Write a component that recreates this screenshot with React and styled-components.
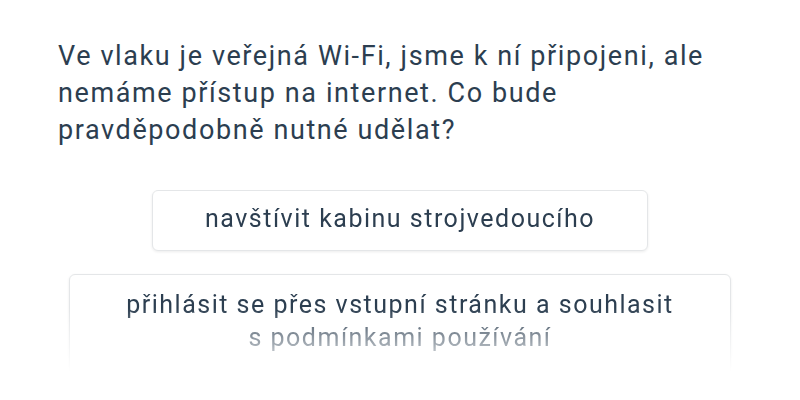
import React from "react";
import styled, { createGlobalStyle } from "styled-components";

const Global = createGlobalStyle`
  html, body { margin: 0; padding: 0; background: #ffffff; }
  body { font-family: Roboto, "Noto Sans", "Liberation Sans", sans-serif; -webkit-font-smoothing: antialiased; }
`;

const Page = styled.div`
  width: 800px;
  height: 400px;
  overflow: hidden;
  box-sizing: border-box;
  padding: 38px 58px 0 58px;
  display: flex;
  flex-direction: column;
`;

const Question = styled.h1`
  margin: 0;
  font-size: 27px;
  font-weight: 400;
  line-height: 37px;
  letter-spacing: 1.6px;
  color: #2c3e50;
  max-width: 680px;
`;

const Answers = styled.div`
  margin-top: 41px;
  display: flex;
  flex-direction: column;
  align-items: center;
  gap: 23px;
  -webkit-mask-image: linear-gradient(to bottom, #000 0, #000 118px, rgba(0,0,0,0) 182px);
  mask-image: linear-gradient(to bottom, #000 0, #000 118px, rgba(0,0,0,0) 182px);
`;

const Answer = styled.button`
  box-sizing: border-box;
  width: fit-content;
  max-width: 662px;
  min-height: 60px;
  padding: ${(p) => (p.$multi ? "13px 52px 40px" : "11px 52px 15px")};
  background: #ffffff;
  border: 1px solid #e4e6e8;
  border-radius: 6px;
  box-shadow: 0 1px 3px rgba(0, 0, 0, 0.08);
  font-family: Roboto, "Noto Sans", "Liberation Sans", sans-serif;
  font-size: 25px;
  font-weight: 400;
  line-height: 33px;
  letter-spacing: 1.5px;
  color: #2c3e50;
  text-align: center;
  cursor: pointer;
`;

export default function App() {
  return (
    <>
      <Global />
      <Page>
        <Question>
          Ve vlaku je veřejná Wi-Fi, jsme k ní připojeni, ale nemáme přístup na internet. Co bude pravděpodobně nutné udělat?
        </Question>
        <Answers>
          <Answer>navštívit kabinu strojvedoucího</Answer>
          <Answer $multi>přihlásit se přes vstupní stránku a souhlasit s podmínkami používání</Answer>
        </Answers>
      </Page>
    </>
  );
}
